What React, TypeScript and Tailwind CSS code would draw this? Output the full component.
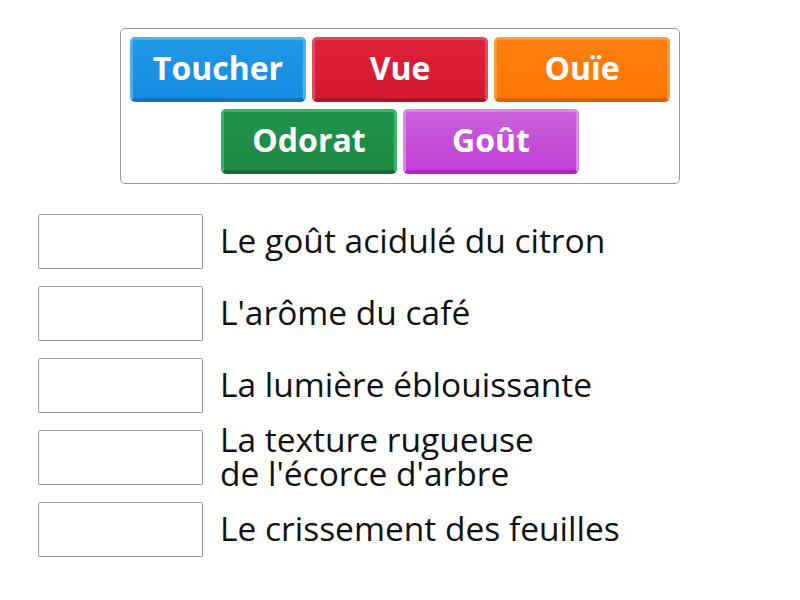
const buttons = [
  { label: "Toucher", cls: "border-[#4fb0ec] border-b-[#1473bd] bg-gradient-to-b from-[#1f98e8] to-[#168ce0]" },
  { label: "Vue", cls: "border-[#e04a5f] border-b-[#ae1429] bg-gradient-to-b from-[#de2038] to-[#d41a31]" },
  { label: "Ouïe", cls: "border-[#ff9a3d] border-b-[#d86300] bg-gradient-to-b from-[#ff7f10] to-[#ff7706]" },
  { label: "Odorat", cls: "border-[#34b864] border-b-[#166733] bg-gradient-to-b from-[#21924a] to-[#1e8a45]" },
  { label: "Goût", cls: "border-[#da86e7] border-b-[#b51fcc] bg-gradient-to-b from-[#c960d9] to-[#c23fd6]" },
];

const items = [
  "Le goût acidulé du citron",
  "L'arôme du café",
  "La lumière éblouissante",
  "La texture rugueuse\nde l'écorce d'arbre",
  "Le crissement des feuilles",
];

export default function App() {
  return (
    <div
      className="w-[800px] h-[600px] bg-white overflow-hidden"
      style={{ fontFamily: '"Open Sans", "Noto Sans", sans-serif' }}
    >
      {/* Réponses */}
      <div className="ml-[120px] mt-[28px] w-[560px] h-[156px] border border-[#9a9a9a] rounded-[5px] px-[8px] pt-[8px] flex flex-wrap justify-center content-start gap-x-[6px] gap-y-[7px]">
        {buttons.map((b) => (
          <div
            key={b.label}
            className={`w-[176px] h-[65px] rounded-[5px] border-[3px] border-b-[4px] flex items-center justify-center text-white font-bold text-[32px] leading-none pb-[3px] ${b.cls}`}
          >
            {b.label}
          </div>
        ))}
      </div>

      {/* Cases */}
      <div className="ml-[38px] mt-[30px] flex flex-col gap-[17px]">
        {items.map((t) => (
          <div key={t} className="flex items-center h-[55px]">
            <div className="w-[165px] h-[55px] shrink-0 border border-[#9a9a9a] rounded-[2px] bg-white" />
            <div className="ml-[17px] pb-[4px] text-[33.5px] leading-[34px] text-[#111] whitespace-pre-line">
              {t}
            </div>
          </div>
        ))}
      </div>
    </div>
  );
}
